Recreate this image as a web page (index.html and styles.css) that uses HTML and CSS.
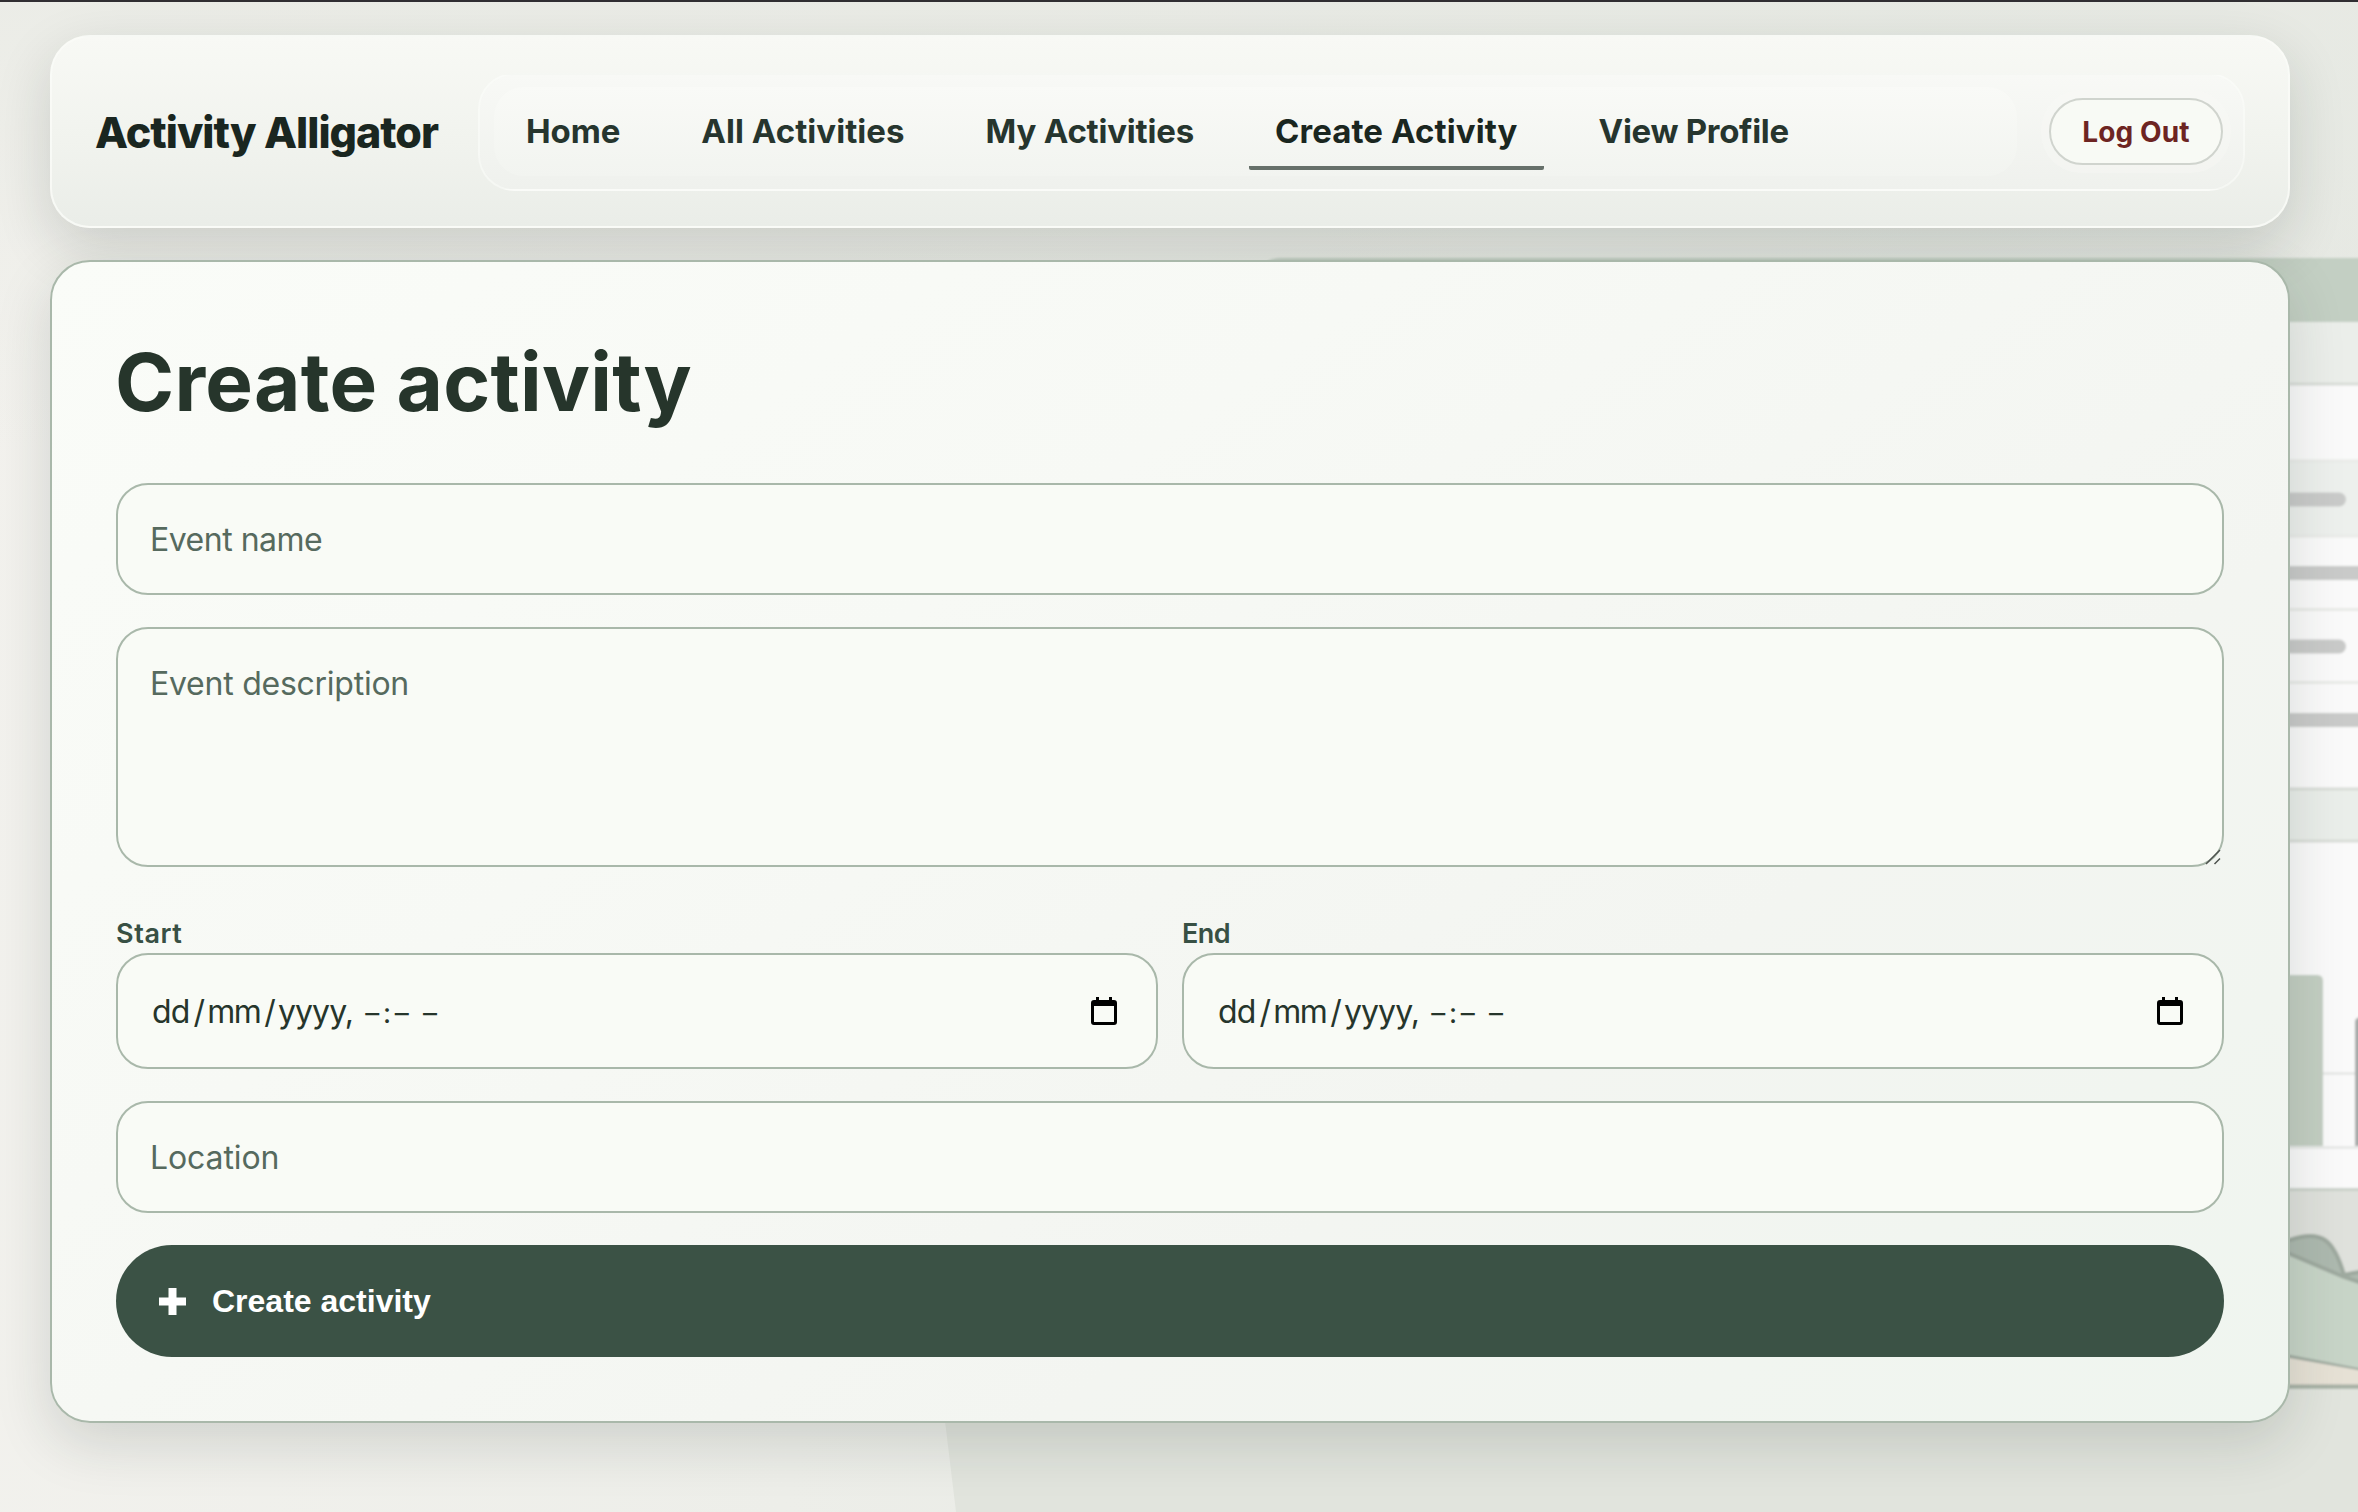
FILE: index.html
```html
<!DOCTYPE html>
<html lang="en">
<head>
<meta charset="UTF-8">
<meta name="viewport" content="width=device-width, initial-scale=1.0">
<title>Activity Alligator - Create activity</title>
<link rel="stylesheet" href="styles.css">
</head>
<body>

<!-- background illustration -->
<svg class="scene" viewBox="0 0 2358 1512" aria-hidden="true">
<defs>
<filter id="soft" x="-5%" y="-5%" width="110%" height="110%"><feGaussianBlur stdDeviation="1"/></filter>
</defs>
<path d="M940 1380 L957 1520 H2380 V1380 Z" fill="#e1e4dd"/>
<g filter="url(#soft)">
<path d="M1262 1400 V272 Q1262 258 1282 258 H2380 V1400 Z" fill="#c3cfc3"/>
<rect x="1300" y="322" width="1080" height="61" fill="#ebeeea"/>
<rect x="1300" y="385" width="1080" height="803" fill="#fafafa"/>
<rect x="1300" y="461" width="1080" height="75" fill="#edf0ed"/>
<rect x="1300" y="790" width="1080" height="51" fill="#eaeeea"/>
<path d="M1300 384H2380M1300 789H2380M1300 841H2380" stroke="#d9ddd8" stroke-width="3"/>
<path d="M1300 461H2380M1300 536H2380M1300 609.500H2380M1300 682.500H2380" stroke="#e9ebe8" stroke-width="3"/>
<path d="M2200 499.500H2339M2200 646.500H2339M2200 573H2380M2200 720H2380" stroke="#c9cac9" stroke-width="14" stroke-linecap="round"/>
<path d="M2200 1073.500H2380M2200 1147.500H2380" stroke="#dfe2df" stroke-width="2"/>
<path d="M2240 1146V975H2317Q2323 975 2323 981V1146Z" fill="#c3cec2"/>
<path d="M2355 1146V1022Q2355 1017 2362 1017H2380V1146Z" fill="#a8aaa9"/>
<rect x="1300" y="1189" width="1080" height="199" fill="#dfe1dc"/>
<path d="M1300 1189.500H2380" stroke="#cbd2ca" stroke-width="3"/>
<path d="M2200 1246 L2290 1240 C2322 1229 2334 1240 2344 1275 Q2360 1271 2380 1270 V1330 H2200Z" fill="#adb9af" stroke="#9ea99f" stroke-width="4"/>
<path d="M2200 1215 L2290 1254 L2344 1277 L2380 1289 V1374 L2290 1357 L2200 1346Z" fill="#c7d4c7" stroke="#9ea99f" stroke-width="4"/>
<path d="M2200 1347 L2290 1358 L2380 1374 V1386 H2200Z" fill="#e6e1d5"/>
<path d="M1300 1386.500H2380" stroke="#a7b0a5" stroke-width="4"/>
<rect x="1240" y="1389" width="1140" height="30" fill="#e1e4dd"/>
</g>
</svg>

<div class="page">
<header class="navbar">
<div class="brand">Activity Alligator</div>
<div class="nav-inner">
<nav class="nav-links">
<a class="home" href="#">Home</a>
<a class="all" href="#">All Activities</a>
<a class="mine" href="#">My Activities</a>
<a class="create active" href="#">Create Activity</a>
<a class="profile" href="#">View Profile</a>
</nav>
<div class="logout-wrap">
<button class="logout" type="button">Log Out</button>
</div>
</div>
</header>

<main class="card">
<h1>Create activity</h1>
<form class="form">
<input class="field name" type="text" placeholder="Event name">
<div class="textarea-wrap">
<textarea class="field area" placeholder="Event description"></textarea>
<svg class="grip" viewBox="0 0 16 16"><path d="M1 15L15 1M9.500 15L15 9.500" stroke="#4d524e" stroke-width="1.500"/></svg>
</div>
<div class="row">
<label class="date">
<span class="label start">Start</span>
<span class="field date-field"><span class="date-text"><span>dd</span><span class="slash">/</span><span class="month">mm</span><span class="slash">/</span><span class="year">yyyy,</span><span class="time">–:– –</span></span>
<svg class="calendar" viewBox="0 0 26 28"><path d="M5 0h3v3h10V0h3v3h2q3 0 3 3v19q0 3-3 3H3q-3 0-3-3V6q0-3 3-3h2zM3 9v16h20V9z" fill="#000" fill-rule="evenodd"/></svg></span>
</label>
<label class="date">
<span class="label">End</span>
<span class="field date-field"><span class="date-text"><span>dd</span><span class="slash">/</span><span class="month">mm</span><span class="slash">/</span><span class="year">yyyy,</span><span class="time">–:– –</span></span>
<svg class="calendar" viewBox="0 0 26 28"><path d="M5 0h3v3h10V0h3v3h2q3 0 3 3v19q0 3-3 3H3q-3 0-3-3V6q0-3 3-3h2zM3 9v16h20V9z" fill="#000" fill-rule="evenodd"/></svg></span>
</label>
</div>
<input class="field location" type="text" placeholder="Location">
<button class="submit" type="button">
<svg class="plus" viewBox="0 0 27 27"><path d="M9.500 0h8v9.500H27v8h-9.500V27h-8v-9.500H0v-8h9.500z" fill="#fff"/></svg>
<span>Create activity</span>
</button>
</form>
</main>
</div>

</body>
</html>
```

FILE: styles.css
```css
* {
    box-sizing: border-box;
}

body {
    margin: 0;
    height: 1512px;
    overflow: hidden;
    font-family: Inter, "Liberation Sans", sans-serif;
    color: #26352b;
    background:
        linear-gradient(180deg, rgba(232, 234, 228, 0.7) 0%, rgba(232, 234, 228, 0) 450px),
        linear-gradient(100deg, #f3f2ee 0%, #edeee9 40%, #e4e8e2 75%, #e7e9e4 100%);
    border-top: 2px solid #302e32;
}

.scene {
    position: absolute;
    top: 0;
    left: 0;
    width: 2358px;
    height: 1512px;
}

.page {
    position: relative;
    padding: 33px 68px 0 50px;
}

.navbar {
    display: flex;
    align-items: center;
    height: 193px;
    padding: 0 43px 0 43px;
    border: 2px solid rgba(250, 251, 247, 0.8);
    border-radius: 40px;
    background: linear-gradient(180deg, #f8f9f5 0%, #f1f3ee 55%, #eaede8 100%);
    box-shadow: 0 20px 56px rgba(26, 38, 32, 0.16);
}

.brand {
    width: 383px;
    font-size: 43px;
    font-weight: 800;
    letter-spacing: -1px;
    white-space: nowrap;
    color: #1a2620;
}

.nav-inner {
    flex: 1;
    display: flex;
    align-items: center;
    justify-content: space-between;
    height: 118px;
    padding: 0 12px 0 14px;
    border: 2px solid rgba(252, 253, 250, 0.5);
    border-radius: 36px;
    background: linear-gradient(180deg, #f8f9f6 0%, #eff1ed 100%);
}

.nav-links {
    display: flex;
    width: 1523px;
    height: 89px;
    padding: 10px 0 0 6px;
    border-radius: 30px;
    background: linear-gradient(180deg, #f9faf7 0%, #f2f4f0 100%);
}

.nav-links a {
    height: 73px;
    padding: 12px 26px 0;
    margin-right: 29px;
    font-size: 33px;
    line-height: 44px;
    font-weight: 700;
    white-space: nowrap;
    text-decoration: none;
    color: #26352e;
}

.nav-links .home {
    letter-spacing: -0.1px;
}

.nav-links .all {
    letter-spacing: 0.05px;
}

.nav-links .mine {
    letter-spacing: -0.2px;
}

.nav-links .create {
    letter-spacing: 0.1px;
}

.nav-links .profile {
    letter-spacing: -0.3px;
}

.nav-links a.active {
    color: #1a2620;
    border-bottom: 4px solid #66706a;
    border-radius: 2px;
}

.logout-wrap {
    padding: 8px;
    border-radius: 40px;
    background: rgba(248, 249, 246, 0.35);
}

.logout {
    display: block;
    width: 174px;
    height: 67px;
    padding: 0;
    border: 2px solid #d0d4ce;
    border-radius: 34px;
    background: #f8faf5;
    font-family: inherit;
    font-size: 28px;
    font-weight: 700;
    letter-spacing: 0.1px;
    color: #6d2422;
}

.card {
    height: 1163px;
    margin-top: 32px;
    padding: 0 64px;
    border: 2px solid #a9b8aa;
    border-radius: 40px;
    background: linear-gradient(145deg, #fafcf8 0%, #f7f9f5 35%, #f3f5f1 68%, #eff5ef 100%);
    box-shadow: 0 20px 56px rgba(26, 38, 32, 0.15);
}

h1 {
    margin: 0 0 0 -1px;
    padding-top: 70px;
    height: 221px;
    font-size: 80px;
    line-height: 100px;
    font-weight: 700;
    letter-spacing: 0.25px;
    color: #26352b;
}

.form {
    display: flex;
    flex-direction: column;
    gap: 32px;
}

.field {
    display: block;
    width: 100%;
    height: 112px;
    padding: 0 32px;
    border: 2px solid #a9b8aa;
    border-radius: 32px;
    background: #f9fbf6;
    font-family: inherit;
    font-size: 32px;
    letter-spacing: -0.8px;
    color: #26352b;
    outline: none;
}

.name {
    letter-spacing: -0.5px;
}

.location {
    letter-spacing: -0.1px;
}

.field::placeholder {
    color: #566a5e;
    opacity: 1;
}

.textarea-wrap {
    position: relative;
    height: 240px;
}

.area {
    height: 240px;
    padding: 33px 32px;
    line-height: 44px;
    letter-spacing: -0.25px;
    resize: none;
}

.grip {
    position: absolute;
    right: 3px;
    bottom: 2px;
    width: 16px;
    height: 16px;
}

.row {
    display: flex;
    gap: 24px;
    height: 170px;
    padding-top: 16px;
}

.date {
    flex: 1;
}

.label {
    display: block;
    height: 38px;
    font-size: 27px;
    line-height: 38px;
    font-weight: 600;
    letter-spacing: -0.5px;
    color: #385044;
}

.start {
    letter-spacing: 0.6px;
}

.date-field {
    display: flex;
    align-items: center;
    justify-content: space-between;
    height: 116px;
    padding: 0 39px 0 34px;
}

.date-text {
    white-space: nowrap;
}

.slash {
    margin: 0 3px 0 4px;
}

.month {
    letter-spacing: -1.6px;
}

.year {
    letter-spacing: -0.9px;
}

.time {
    margin-left: 12px;
    font-size: 28px;
    letter-spacing: 3.7px;
    word-spacing: -1px;
}

.calendar {
    width: 26px;
    height: 28px;
}

.submit {
    display: flex;
    align-items: center;
    height: 112px;
    padding: 0 43px;
    border: none;
    border-radius: 56px;
    background: #3b5245;
    color: #fff;
    font-family: "Liberation Sans", Arial, sans-serif;
    font-size: 32px;
    font-weight: 700;
}

.plus {
    width: 27px;
    height: 27px;
    margin-right: 26px;
}
```
